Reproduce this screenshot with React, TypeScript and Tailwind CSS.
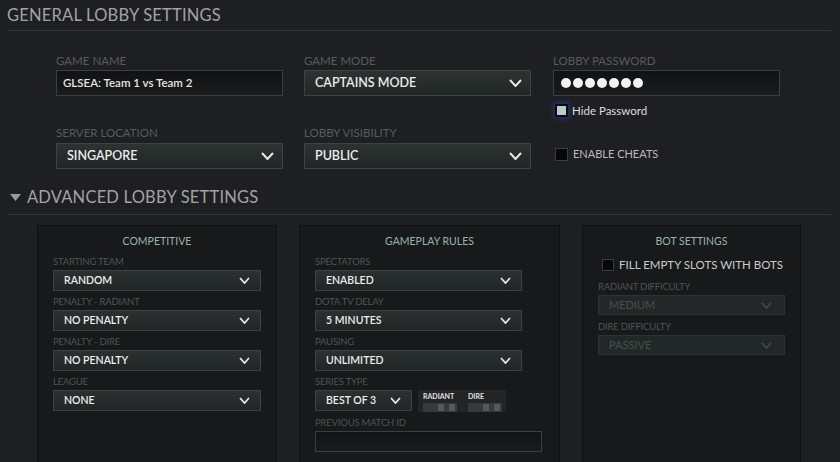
import React from "react";

const Chevron = ({ w = 11, h = 6, color = "#e8e8e8", sw = 2 }: { w?: number; h?: number; color?: string; sw?: number }) => (
  <svg width={w + 2} height={h + 2} viewBox={`0 0 ${w + 2} ${h + 2}`} className="shrink-0">
    <path d={`M1 1 L${(w + 2) / 2} ${h + 1} L${w + 1} 1`} fill="none" stroke={color} strokeWidth={sw} />
  </svg>
);

const BigSelect = ({ value }: { value: string }) => (
  <div className="flex h-[26px] w-[227px] items-center justify-between border border-[#3b4442] bg-gradient-to-b from-[#2c3331] to-[#212726] pl-[10px] pr-[8px] text-[12.5px] font-semibold text-[#ececec]">
    <span>{value}</span>
    <Chevron />
  </div>
);

const BigLabel = ({ children }: { children: React.ReactNode }) => (
  <div className="h-[14px] text-[11.5px] leading-[14px] text-[#575c5d]">{children}</div>
);

const SmallLabel = ({ children }: { children: React.ReactNode }) => (
  <div className="mb-[2px] h-[12px] text-[9.5px] leading-[12px] tracking-[-0.2px] text-[#4f5555]">{children}</div>
);

const SmallSelect = ({ value, w, disabled = false }: { value: string; w: number; disabled?: boolean }) => (
  <div
    style={{ width: w }}
    className={
      disabled
        ? "flex h-[20px] items-center justify-between border border-[#2c3332] bg-[#222827] pl-[10px] pr-[12px] text-[11px] text-[#484e4d]"
        : "flex h-[21px] items-center justify-between border border-[#3a4341] bg-gradient-to-b from-[#2a3130] to-[#202625] pl-[10px] pr-[10px] text-[10.5px] font-semibold text-[#eeeeee]"
    }
  >
    <span>{value}</span>
    <Chevron w={9} h={5} sw={disabled ? 1.2 : 1.8} color={disabled ? "#4a504f" : "#e6e6e6"} />
  </div>
);

const Field = ({ label, value }: { label: string; value: string }) => (
  <div className="mb-[5px]">
    <SmallLabel>{label}</SmallLabel>
    <SmallSelect value={value} w={208} />
  </div>
);

const PanelTitle = ({ children }: { children: React.ReactNode }) => (
  <div className="mb-[8px] text-center text-[10.5px] leading-[14px] text-[#9bb3ab]">{children}</div>
);

const TeamBox = ({ label }: { label: string }) => (
  <div className="flex flex-col">
    <div className="h-[9px] text-[7px] font-bold leading-[9px] text-[#e0e0e0]">{label}</div>
    <div className="mt-[2px] flex h-[10px] w-[34px] items-center justify-end gap-[5px] bg-[#37393b] pr-[2px]">
      <div className="h-[7px] w-[6px] bg-[#56585a]" />
      <div className="h-[7px] w-[6px] bg-[#56585a]" />
    </div>
  </div>
);

export default function App() {
  return (
    <div
      className="h-[462px] w-[840px] overflow-hidden bg-[#1e1f22]"
      style={{ fontFamily: "Lato, 'Open Sans', sans-serif" }}
    >
      {/* General header */}
      <div className="pl-[7px] pt-[4px] text-[16.5px] leading-[22px] tracking-[0.2px] text-[#a3a3a3]">GENERAL LOBBY SETTINGS</div>
      <div className="mx-[7px] mt-[4px] h-px w-[824px] bg-[#30383a]" />

      {/* General grid */}
      <div className="flex pl-[56px] pt-[23px]">
        <div className="flex w-[248px] flex-col">
          <BigLabel>GAME NAME</BigLabel>
          <div className="mt-[2px] flex h-[26px] w-[227px] items-center border border-[#3a3f3f] bg-gradient-to-b from-[#111213] to-[#1a1b1c] pl-[6px] text-[11.5px] font-semibold text-[#e6e6e6]">
            GLSEA: Team 1 vs Team 2
          </div>
          <div className="mt-[30px]">
            <BigLabel>SERVER LOCATION</BigLabel>
          </div>
          <div className="mt-[3px]">
            <BigSelect value="SINGAPORE" />
          </div>
        </div>
        <div className="flex w-[249px] flex-col">
          <BigLabel>GAME MODE</BigLabel>
          <div className="mt-[2px]">
            <BigSelect value="CAPTAINS MODE" />
          </div>
          <div className="mt-[30px]">
            <BigLabel>LOBBY VISIBILITY</BigLabel>
          </div>
          <div className="mt-[3px]">
            <BigSelect value="PUBLIC" />
          </div>
        </div>
        <div className="flex w-[240px] flex-col">
          <BigLabel>LOBBY PASSWORD</BigLabel>
          <div className="mt-[2px] flex h-[26px] w-[227px] items-center gap-[2px] border border-[#3a3f3f] bg-gradient-to-b from-[#111213] to-[#1a1b1c] pl-[7px]">
            {[0, 1, 2, 3, 4, 5, 6].map((i) => (
              <div key={i} className="h-[10px] w-[10px] rounded-full bg-[#f2f2f2]" />
            ))}
          </div>
          <div className="ml-[2px] mt-[6px] flex items-center gap-[4px]">
            <div className="flex h-[13px] w-[13px] items-center justify-center bg-[#0b0b10] shadow-[0_0_4px_2px_#2c2b6a]">
              <div className="h-[9px] w-[9px] bg-[#b7cfcb]" />
            </div>
            <span className="text-[11.5px] text-[#dedede]">Hide Password</span>
          </div>
          <div className="ml-[2px] mt-[27px] flex items-center gap-[5px]">
            <div className="h-[13px] w-[13px] border border-[#3a3c3d] bg-[#070707]" />
            <span className="text-[11px] text-[#b9bdb9]">ENABLE CHEATS</span>
          </div>
        </div>
      </div>

      {/* Advanced header */}
      <div className="mt-[17px] flex items-center pl-[10px]">
        <svg width="11" height="7" viewBox="0 0 11 7" className="mr-[6px]">
          <path d="M0 0 L11 0 L5.5 7 Z" fill="#9a9a9a" />
        </svg>
        <span className="text-[16.5px] leading-[22px] tracking-[0.2px] text-[#a3a3a3]">ADVANCED LOBBY SETTINGS</span>
      </div>
      <div className="mx-[7px] mt-[6px] h-px w-[824px] bg-[#30383a]" />

      {/* Panels */}
      <div className="ml-[37px] mt-[10px] flex gap-[22px]">
        <div className="h-[240px] w-[240px] border border-[#0e1011] bg-[#17191a] px-[15px] pt-[8px]">
          <PanelTitle>COMPETITIVE</PanelTitle>
          <Field label="STARTING TEAM" value="RANDOM" />
          <Field label="PENALTY - RADIANT" value="NO PENALTY" />
          <Field label="PENALTY - DIRE" value="NO PENALTY" />
          <Field label="LEAGUE" value="NONE" />
        </div>
        <div className="h-[240px] w-[261px] border border-[#0e1011] bg-[#17191a] px-[15px] pt-[8px]">
          <PanelTitle>GAMEPLAY RULES</PanelTitle>
          <div className="mb-[5px]">
            <SmallLabel>SPECTATORS</SmallLabel>
            <SmallSelect value="ENABLED" w={207} />
          </div>
          <div className="mb-[5px]">
            <SmallLabel>DOTA TV DELAY</SmallLabel>
            <SmallSelect value="5 MINUTES" w={207} />
          </div>
          <div className="mb-[5px]">
            <SmallLabel>PAUSING</SmallLabel>
            <SmallSelect value="UNLIMITED" w={207} />
          </div>
          <div className="mb-[5px]">
            <SmallLabel>SERIES TYPE</SmallLabel>
            <div className="flex gap-[6px]">
              <SmallSelect value="BEST OF 3" w={97} />
              <div className="flex h-[22px] w-[88px] gap-[11px] bg-[#232426] pl-[5px] pt-[2px]">
                <TeamBox label="RADIANT" />
                <TeamBox label="DIRE" />
              </div>
            </div>
          </div>
          <div>
            <SmallLabel>PREVIOUS MATCH ID</SmallLabel>
            <div className="h-[21px] w-[227px] border border-[#3a3f3f] bg-gradient-to-b from-[#121314] to-[#1a1b1c]" />
          </div>
        </div>
        <div className="h-[240px] w-[219px] border border-[#0e1011] bg-[#17191a] px-[15px] pt-[8px]">
          <PanelTitle>BOT SETTINGS</PanelTitle>
          <div className="mb-[8px] ml-[4px] flex items-center gap-[5px] whitespace-nowrap">
            <div className="h-[12px] w-[12px] shrink-0 border border-[#3a3c3d] bg-[#070707]" />
            <span className="text-[11.5px] text-[#c9cdca]">FILL EMPTY SLOTS WITH BOTS</span>
          </div>
          <div className="mb-[6px]">
            <SmallLabel>RADIANT DIFFICULTY</SmallLabel>
            <SmallSelect value="MEDIUM" w={187} disabled />
          </div>
          <div>
            <SmallLabel>DIRE DIFFICULTY</SmallLabel>
            <SmallSelect value="PASSIVE" w={187} disabled />
          </div>
        </div>
      </div>
    </div>
  );
}
